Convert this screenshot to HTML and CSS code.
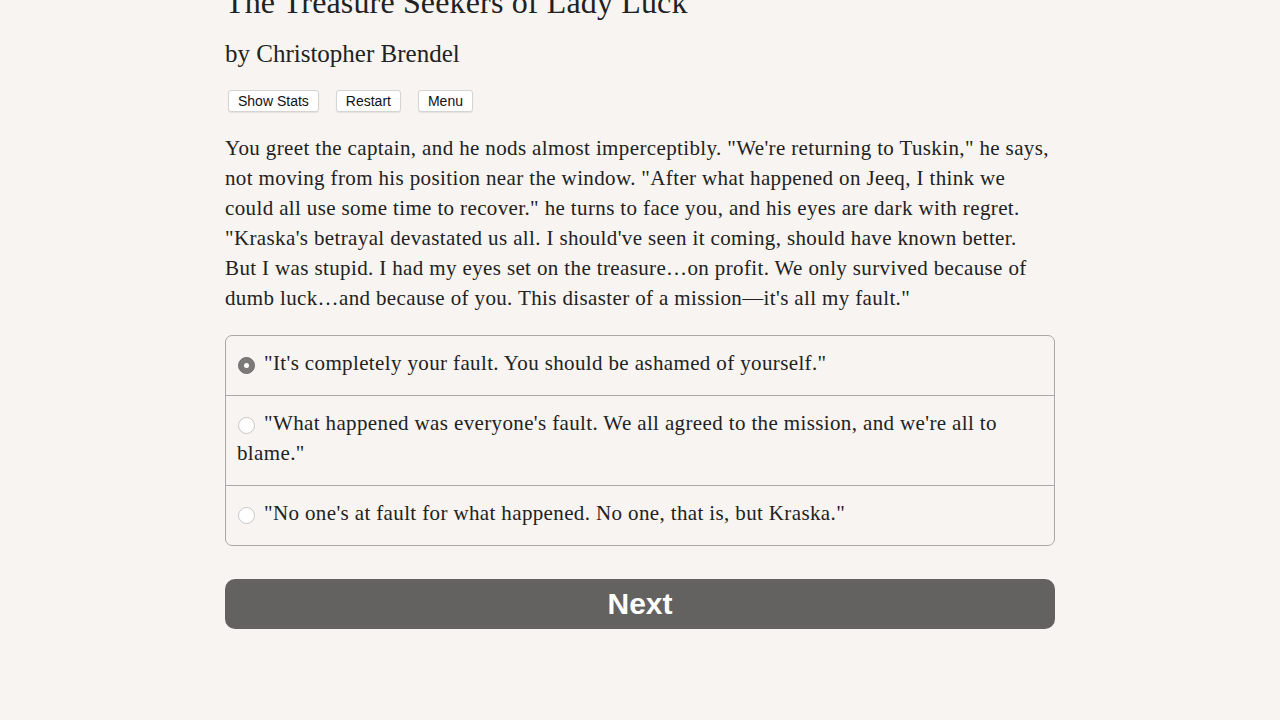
FILE: index.html
```html
<!DOCTYPE html>
<html>
<head>
<meta charset="utf-8">
<link rel="stylesheet" href="styles.css">
</head>
<body>
<div class="page">
  <h1 class="title">The Treasure Seekers of Lady Luck</h1>
  <h2 class="author">by Christopher Brendel</h2>
  <div class="toolbar">
    <button class="tbtn">Show Stats</button>
    <button class="tbtn">Restart</button>
    <button class="tbtn">Menu</button>
  </div>
  <p class="story">You greet the captain, and he nods almost imperceptibly. "We're returning to Tuskin," he says, not moving from his position near the window. "After what happened on Jeeq, I think we could all use some time to recover." he turns to face you, and his eyes are dark with regret. "Kraska's betrayal devastated us all. I should've seen it coming, should have known better. But I was stupid. I had my eyes set on the treasure…on profit. We only survived because of dumb luck…and because of you. This disaster of a mission—it's all my fault."</p>
  <div class="choices">
    <label class="choice"><span class="radio checked"></span>"It's completely your fault. You should be ashamed of yourself."</label>
    <label class="choice"><span class="radio"></span>"What happened was everyone's fault. We all agreed to the mission, and we're all to blame."</label>
    <label class="choice"><span class="radio"></span>"No one's at fault for what happened. No one, that is, but Kraska."</label>
  </div>
  <button class="next">Next</button>
</div>
</body>
</html>
```

FILE: styles.css
```css
html, body {
  margin: 0;
  padding: 0;
  background: #f7f4f1;
}
body {
  font-family: "Liberation Serif", "Times New Roman", serif;
  color: #222;
}
.page {
  width: 830px;
  margin-left: 225px;
}
.title {
  font-weight: normal;
  font-size: 32px;
  line-height: 40px;
  margin: -18px 0 0 0;
  letter-spacing: 0.15px;
}
.author {
  font-weight: normal;
  font-size: 25px;
  line-height: 32px;
  margin: 16px 0 0 0;
}
.toolbar {
  display: flex;
  gap: 17px;
  margin: 20px 0 0 3px;
}
.tbtn {
  font-family: "Liberation Sans", Arial, sans-serif;
  font-size: 14px;
  color: #111;
  background: #fff;
  border: 1px solid #d6d3d0;
  border-radius: 3px;
  padding: 0 9px;
  height: 22px;
  line-height: 20px;
  box-shadow: 0 1px 1px rgba(0,0,0,0.08);
}
.story {
  width: 826px;
  font-size: 21px;
  line-height: 30px;
  margin: 21px 0 0 0;
  letter-spacing: 0.37px;
}
.choices {
  margin-top: 22px;
  box-sizing: border-box;
  border: 1px solid #aaa8a6;
  border-radius: 7px;
  overflow: hidden;
}
.choice {
  display: block;
  padding: 12px 11px 17px 11px;
  font-size: 21px;
  line-height: 30px;
  letter-spacing: 0.37px;
  border-top: 1px solid #aaa8a6;
}
.choice:first-child {
  border-top: none;
}
.radio {
  display: inline-block;
  box-sizing: border-box;
  width: 17px;
  height: 17px;
  border-radius: 50%;
  border: 1px solid #c9c6c3;
  background: #fff;
  vertical-align: -4px;
  margin: 0 9px 0 1px;
  position: relative;
}
.radio.checked {
  background: #7c7a79;
  border-color: #6e6c6b;
}
.radio.checked::after {
  content: "";
  position: absolute;
  width: 5px;
  height: 5px;
  border-radius: 50%;
  background: #fff;
  left: 5px;
  top: 5px;
}
.next {
  display: block;
  margin-top: 33px;
  width: 830px;
  height: 50px;
  border: none;
  border-radius: 10px;
  background: #636261;
  color: #fff;
  font-family: "Liberation Sans", Arial, sans-serif;
  font-weight: bold;
  font-size: 30px;
  padding: 0;
}
```
